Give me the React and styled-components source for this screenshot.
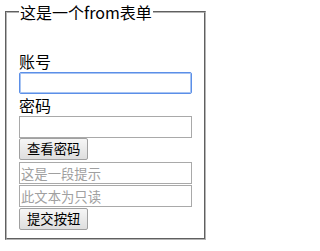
import React from "react";
import styled, { createGlobalStyle } from "styled-components";

const Global = createGlobalStyle`
  html, body { margin: 0; padding: 0; background: #fff; }
  body { font-family: "Noto Sans CJK SC", "Noto Sans", sans-serif; color: #000; }
`;

const Fieldset = styled.fieldset`
  box-sizing: border-box;
  width: 201px;
  margin: 0 0 0 5px;
  padding: 0 12px 8px 12px;
  border: 2px groove #b4b4b4;
  font-size: 16px;
  line-height: 22px;
`;

const Legend = styled.legend`
  padding: 0 1px;
  font-size: 16px;
  line-height: 24px;
`;

const Body = styled.div`
  display: flex;
  flex-direction: column;
  align-items: flex-start;
  padding-top: 26px;
`;

const Label = styled.label`
  display: block;
  font-size: 16px;
  line-height: 22px;
  margin-top: ${(p) => p.$top || 0}px;
`;

const Input = styled.input`
  box-sizing: border-box;
  width: 173px;
  height: 22px;
  margin: ${(p) => p.$top || 0}px 0 0 0;
  padding: 0 1px;
  font-family: "Noto Sans CJK SC", sans-serif;
  font-size: 13.33px;
  color: #000;
  background: #fff;
  border: 1px solid ${(p) => (p.$focus ? "#5b8fe8" : "#a9a9a9")};
  box-shadow: ${(p) => (p.$focus ? "inset 0 0 0 1px #a8c4f2" : "none")};
  border-radius: ${(p) => (p.$focus ? "2px" : "0")};
  outline: none;
  &::placeholder { color: #a0a0a0; }
`;

const Button = styled.button`
  box-sizing: border-box;
  height: 22px;
  margin-top: ${(p) => p.$top || 0}px;
  padding: 0 7px;
  font-family: "Noto Sans CJK SC", sans-serif;
  font-size: 13.33px;
  line-height: 20px;
  color: #000;
  background: linear-gradient(#f6f6f6, #dedede);
  border: 1px solid #a0a0a0;
  border-radius: 2px;
`;

export default function App() {
  return (
    <>
      <Global />
      <form>
        <Fieldset>
          <Legend>这是一个from表单</Legend>
          <Body>
            <Label>账号</Label>
            <Input $focus />
            <Label>密码</Label>
            <Input type="password" />
            <Button type="button">查看密码</Button>
            <Input $top={2} placeholder="这是一段提示" />
            <Input $top={1} placeholder="此文本为只读" readOnly />
            <Button type="submit" $top={1}>提交按钮</Button>
          </Body>
        </Fieldset>
      </form>
    </>
  );
}
